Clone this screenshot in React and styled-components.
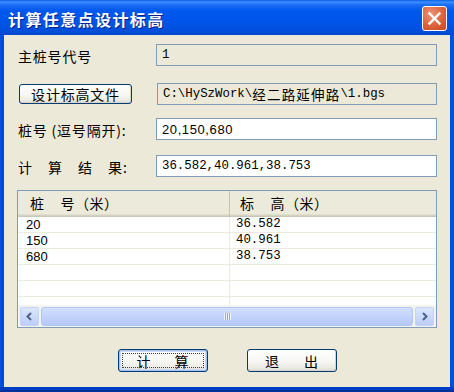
import React from "react";
import styled, { createGlobalStyle } from "styled-components";

const GlobalStyle = createGlobalStyle`
  html, body {
    margin: 0;
    padding: 0;
    background: #ffffff;
  }
  body {
    font-family: "Noto Sans CJK SC", "Liberation Sans", sans-serif;
  }
`;

const cjk = `"Noto Sans CJK SC", "Liberation Sans", sans-serif`;
const mono = `"Liberation Mono", "Noto Sans CJK SC", monospace`;
const sans = `"Liberation Sans", "Noto Sans CJK SC", sans-serif`;

const Window = styled.div`
  width: 454px;
  height: 392px;
  display: flex;
  flex-direction: column;
  background: #0054e3;
  box-sizing: border-box;
`;

const TitleBar = styled.div`
  height: 35px;
  flex: none;
  display: flex;
  align-items: center;
  padding: 2px 7px 0 8px;
  box-sizing: border-box;
  background: linear-gradient(
    to bottom,
    #0a5ee6 0%,
    #3d8ffd 6%,
    #1a6cf5 14%,
    #0058ee 30%,
    #0055e8 60%,
    #0050dd 85%,
    #0446cc 100%
  );
`;

const Title = styled.div`
  font-family: ${cjk};
  font-weight: bold;
  font-size: 16px;
  letter-spacing: 1.4px;
  color: #ffffff;
  text-shadow: 1px 1px 0 #0a1e8a;
  line-height: 1;
`;

const CloseButton = styled.div`
  margin-left: auto;
  width: 25px;
  height: 25px;
  box-sizing: border-box;
  border: 1px solid #ffffff;
  border-radius: 3px;
  background: radial-gradient(circle at 35% 30%, #ee9478 0%, #e06a45 45%, #c9421d 100%);
  display: flex;
  align-items: center;
  justify-content: center;
`;

const Frame = styled.div`
  flex: 1;
  display: flex;
  padding: 0 4px 5px 4px;
  background: linear-gradient(to right, #0058ee, #0045d5 2px, #0050e0 4px);
  box-shadow: inset 0 -2px 0 #00309a, inset 0 -5px 0 #003dc4;
`;

const Body = styled.div`
  flex: 1;
  background: #ece9d8;
  padding: 9px 13px 0 14px;
  display: flex;
  flex-direction: column;
`;

const Row = styled.div`
  display: flex;
  align-items: center;
  height: 22px;
  margin-top: ${(p) => p.$gap || 0}px;
`;

const Label = styled.div`
  width: 138px;
  flex: none;
  font-family: ${cjk};
  font-size: 14px;
  letter-spacing: ${(p) => p.$spacing || 0.8}px;
  line-height: 1;
  color: #000;
  white-space: pre;
  padding-top: 2px;
`;

const Field = styled.div`
  flex: 1;
  height: 22px;
  box-sizing: border-box;
  border: 1px solid #7f9db9;
  background: ${(p) => (p.$readOnly ? "#ece9d8" : "#ffffff")};
  padding-left: 5px;
  display: flex;
  align-items: center;
  font-family: ${(p) => (p.$mono ? mono : sans)};
  font-size: ${(p) => (p.$mono ? "12.4px" : "13px")};
  letter-spacing: ${(p) => (p.$mono ? "0" : "0.6px")};
  color: #000;
  white-space: pre;
`;

const Wide = styled.span`
  font-family: ${cjk};
  font-size: 13.5px;
  letter-spacing: 1.2px;
`;

const FileButtonCell = styled.div`
  width: 138px;
  flex: none;
  display: flex;
  align-items: center;
  padding-left: 1px;
`;

const XPButton = styled.div`
  width: ${(p) => p.$w}px;
  height: ${(p) => p.$h}px;
  box-sizing: border-box;
  border: 1px solid #003c74;
  border-radius: 3px;
  background: linear-gradient(to bottom, #ffffff 0%, #f6f6f3 55%, #ebeae3 85%, #dcd9cc 100%);
  box-shadow: ${(p) =>
    p.$default
      ? "inset 0 0 0 1px #a6c0f3, inset 0 0 0 2px #cfdcf8"
      : "inset -1px -1px 0 #d8d4c8"};
  display: flex;
  align-items: center;
  justify-content: center;
  gap: ${(p) => p.$gap || 0}px;
  font-family: ${cjk};
  font-size: 14px;
  letter-spacing: ${(p) => (p.$gap ? 0 : 0.8)}px;
  line-height: 1;
  color: #000;
  position: relative;
  margin-left: ${(p) => p.$ml || 0}px;
`;

const FocusRing = styled.div`
  position: absolute;
  inset: 3px;
  border: 1px dotted #404040;
  pointer-events: none;
`;

const List = styled.div`
  margin-top: 13px;
  height: 138px;
  box-sizing: border-box;
  border: 1px solid #7f9db9;
  margin-left: -1px;
  background: #ffffff;
  display: flex;
  flex-direction: column;
`;

const Header = styled.div`
  height: 26px;
  flex: none;
  display: flex;
  background: #ebeadb;
  box-shadow: inset 0 -1px 0 #cbc7b8, inset 0 -2px 0 #d6d2c2, inset 0 -3px 0 #e2decd;
`;

const HeaderCell = styled.div`
  width: ${(p) => (p.$w ? `${p.$w}px` : "auto")};
  flex: ${(p) => (p.$w ? "none" : 1)};
  display: flex;
  align-items: center;
  padding-left: ${(p) => p.$pad}px;
  padding-bottom: 2px;
  box-sizing: border-box;
  font-family: ${cjk};
  font-size: 14px;
  letter-spacing: 0.5px;
  line-height: 1;
  color: #000;
  white-space: pre;
  border-right: ${(p) => (p.$w ? "1px solid #c7c5b2" : "none")};
`;

const Gap = styled.span`
  display: inline-block;
  width: ${(p) => p.$w}px;
`;

const Rows = styled.div`
  height: 88px;
  flex: none;
  overflow: hidden;
`;

const DataRow = styled.div`
  height: 16px;
  display: flex;
  box-sizing: border-box;
  border-bottom: 1px solid #edebe0;
`;

const Cell = styled.div`
  width: ${(p) => (p.$w ? `${p.$w}px` : "auto")};
  flex: ${(p) => (p.$w ? "none" : 1)};
  box-sizing: border-box;
  padding-left: ${(p) => p.$pad}px;
  font-family: ${(p) => (p.$mono ? mono : sans)};
  font-size: ${(p) => (p.$mono ? "12.4px" : "13px")};
  line-height: 15px;
  color: #000;
  border-right: ${(p) => (p.$w ? "1px solid #edebe0" : "none")};
`;

const ScrollBar = styled.div`
  flex: 1;
  display: flex;
  align-items: center;
  padding: 0 2px 0 2px;
  background: #f4f3ee;
`;

const ArrowButton = styled.div`
  width: 19px;
  height: 19px;
  flex: none;
  box-sizing: border-box;
  border: 1px solid #c4d3f6;
  border-radius: 2px;
  background: linear-gradient(to bottom, #dbe6fd, #bccdf8);
  display: flex;
  align-items: center;
  justify-content: center;
`;

const Track = styled.div`
  flex: 1;
  height: 19px;
  padding: 0 2px;
  display: flex;
`;

const Thumb = styled.div`
  flex: 1;
  box-sizing: border-box;
  border: 1px solid #b2c5f3;
  border-radius: 3px;
  background: linear-gradient(to bottom, #d3e0fd, #c2d3fb 50%, #b5c9f7);
  display: flex;
  align-items: center;
  justify-content: center;
`;

const Grip = styled.div`
  width: 7px;
  height: 7px;
  background: repeating-linear-gradient(
    to right,
    #eef3fe 0px,
    #eef3fe 1px,
    #8faaee 1px,
    #8faaee 2px
  );
`;

const ButtonBar = styled.div`
  display: flex;
  justify-content: center;
  margin-top: 21px;
  padding-right: 1px;
`;

const rows = [
  ["20", "36.582"],
  ["150", "40.961"],
  ["680", "38.753"],
  ["", ""],
  ["", ""],
  ["", ""],
];

const App = () => {
  return (
    <>
      <GlobalStyle />
      <Window>
        <TitleBar>
          <Title>计算任意点设计标高</Title>
          <CloseButton>
            <svg width="15" height="15" viewBox="0 0 15 15">
              <path
                d="M2.5 2.5 L12.5 12.5 M12.5 2.5 L2.5 12.5"
                stroke="#ffffff"
                strokeWidth="2.4"
                strokeLinecap="square"
              />
            </svg>
          </CloseButton>
        </TitleBar>
        <Frame>
          <Body>
            <Row>
              <Label>主桩号代号</Label>
              <Field $readOnly $mono>1</Field>
            </Row>
            <Row $gap={17}>
              <FileButtonCell>
                <XPButton $w={113} $h={20}>设计标高文件</XPButton>
              </FileButtonCell>
              <Field $readOnly $mono>
                C:\HySzWork\<Wide>经二路延伸路</Wide>\1.bgs
              </Field>
            </Row>
            <Row $gap={13}>
              <Label>桩号 (逗号隔开):</Label>
              <Field>20,150,680</Field>
            </Row>
            <Row $gap={15}>
              <Label $spacing={1}>计　算　结　果:</Label>
              <Field $mono>36.582,40.961,38.753</Field>
            </Row>
            <List>
              <Header>
                <HeaderCell $w={212} $pad={12}>
                  桩<Gap $w={16} />号（米）
                </HeaderCell>
                <HeaderCell $pad={10}>
                  标<Gap $w={16} />高（米）
                </HeaderCell>
              </Header>
              <Rows>
                {rows.map((r, i) => (
                  <DataRow key={i}>
                    <Cell $w={212} $pad={8}>{r[0]}</Cell>
                    <Cell $pad={6} $mono>{r[1]}</Cell>
                  </DataRow>
                ))}
              </Rows>
              <ScrollBar>
                <ArrowButton>
                  <svg width="9" height="9" viewBox="0 0 9 9">
                    <path d="M6 1 L2.5 4.5 L6 8" fill="none" stroke="#4d6185" strokeWidth="2" />
                  </svg>
                </ArrowButton>
                <Track>
                  <Thumb>
                    <Grip />
                  </Thumb>
                </Track>
                <ArrowButton>
                  <svg width="9" height="9" viewBox="0 0 9 9">
                    <path d="M3 1 L6.5 4.5 L3 8" fill="none" stroke="#4d6185" strokeWidth="2" />
                  </svg>
                </ArrowButton>
              </ScrollBar>
            </List>
            <ButtonBar>
              <XPButton $w={90} $h={23} $gap={24} $default>
                <span>计</span>
                <span>算</span>
                <FocusRing />
              </XPButton>
              <XPButton $w={90} $h={23} $gap={25} $ml={39}>
                <span>退</span>
                <span>出</span>
              </XPButton>
            </ButtonBar>
          </Body>
        </Frame>
      </Window>
    </>
  );
};

export default App;
